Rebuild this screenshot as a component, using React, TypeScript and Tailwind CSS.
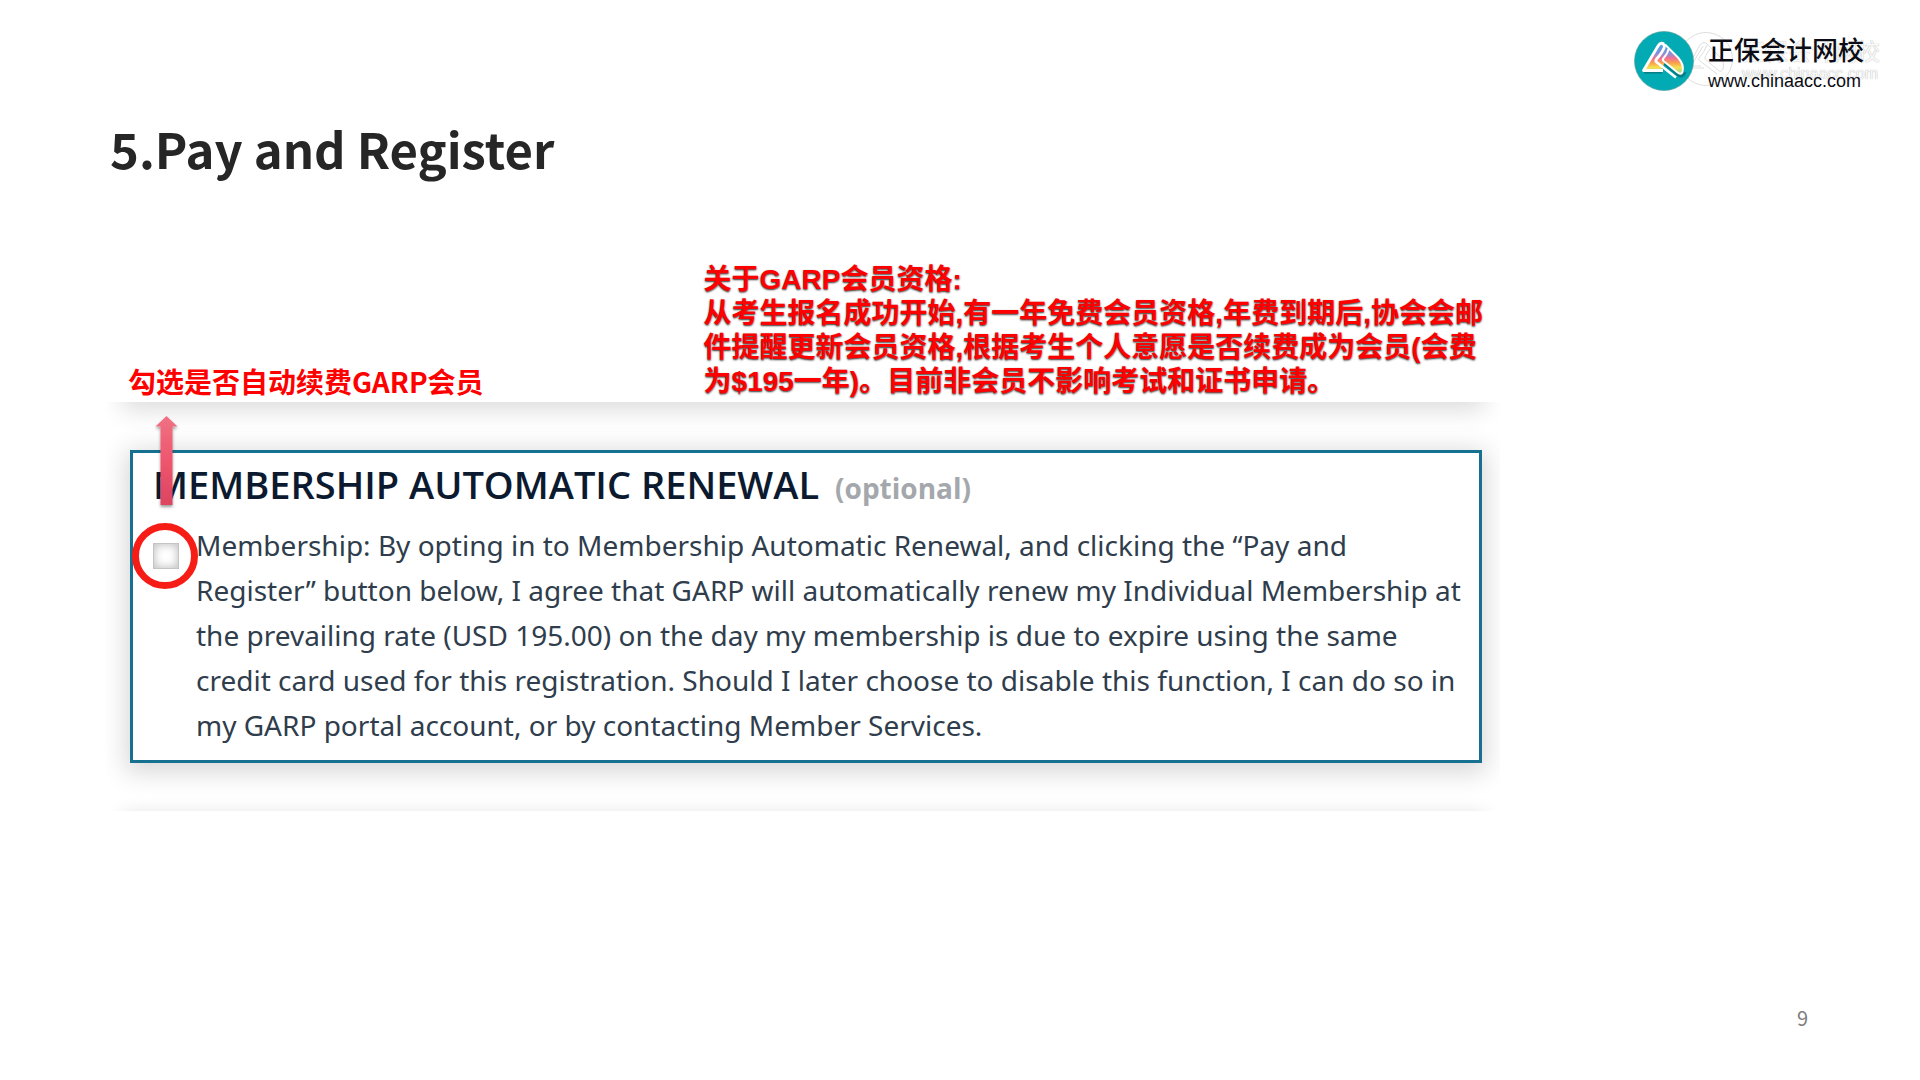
const TERMS = [
  'Membership: By opting in to Membership Automatic Renewal, and clicking the “Pay and',
  'Register” button below, I agree that GARP will automatically renew my Individual Membership at',
  'the prevailing rate (USD 195.00) on the day my membership is due to expire using the same',
  'credit card used for this registration. Should I later choose to disable this function, I can do so in',
  'my GARP portal account, or by contacting Member Services.',
];

const NOTES = [
  '关于GARP会员资格:',
  '从考生报名成功开始,有一年免费会员资格,年费到期后,协会会邮',
  '件提醒更新会员资格,根据考生个人意愿是否续费成为会员(会费',
  '为$195一年)。目前非会员不影响考试和证书申请。',
];

const LogoMark = () => (
  <svg viewBox="0 0 60 60" className="h-[60px] w-[60px] shrink-0" aria-hidden="true">
    <defs>
      <linearGradient id="rainbow" x1="0" y1="0" x2="0" y2="1">
        <stop offset="0.1" stopColor="#4f9fe0" />
        <stop offset="0.35" stopColor="#8c8fd8" />
        <stop offset="0.5" stopColor="#f5708f" />
        <stop offset="0.65" stopColor="#f8a24e" />
        <stop offset="0.8" stopColor="#f6e04d" />
        <stop offset="1" stopColor="#8fd694" />
      </linearGradient>
    </defs>
    <circle cx="30" cy="30" r="29.5" fill="#02abb3" stroke="#5d9ea2" strokeWidth="0.7" />
    <path d="M10 41H28M29 31L44 44Q49 47 51 41" fill="none" stroke="#0b5f66" strokeWidth="3" strokeOpacity="0.6" />
    <path d="M9.500 39.500L24 15Q26.500 11 30 13L45 27.500Q50 34 48.500 41Q47 44 43 41L31 31L27 39.500Z" fill="url(#rainbow)" />
    <path d="M29 39.500H9.500L24 15Q26.500 11 30 13" fill="none" stroke="#fff" strokeWidth="2.800" strokeLinejoin="round" />
    <path d="M29 13Q31 14 30 17Q28 22 22.500 28Q21 30 23 31.500L42 46.500" fill="none" stroke="#fff" strokeWidth="2.800" strokeLinejoin="round" />
    <path d="M31 13.500L44 26.500Q50.500 34 48.500 41Q47 44.500 43 41L29.500 30Q28 28.500 30 26.500Q34 22 34.500 18" fill="none" stroke="#fff" strokeWidth="2" strokeLinejoin="round" />
  </svg>
);

// faint duplicate of the logo that sits behind the main one
const LogoGhost = () => (
  <div className="absolute inset-0" aria-hidden="true">
    <svg viewBox="0 0 54 54" className="absolute left-[45px] top-[3px] h-[54px] w-[54px]">
      <g fill="none" stroke="#d6d6d6" strokeWidth="0.8">
        <circle cx="27" cy="27" r="26.500" />
        <path d="M25 36H8L21 13Q24 9 27 11L41 25Q46 31 44 37Q42 41 39 38L26 27Q25 25 31 17" />
        <path d="M22 34H12L24 14M28 13Q25 21 20 26Q19 28 21 29L38 42" />
      </g>
    </svg>
    <div className="absolute left-[108px] top-[9px] whitespace-nowrap leading-6 text-[#fafafa] [text-shadow:0_0_1px_#999]">
      <div className="font-['Noto_Sans_CJK_SC',sans-serif] text-[23px]">正保会计网校</div>
      <div className="font-['Liberation_Sans',sans-serif] text-base leading-6">www.chinaacc.com</div>
    </div>
  </div>
);

const Logo = () => (
  <a href="http://www.chinaacc.com" className="relative flex items-center gap-[14px]">
    <LogoGhost />
    <div className="relative">
      <LogoMark />
    </div>
    <div className="relative text-[#0c0c14]">
      <div className="font-['Noto_Sans_CJK_SC',sans-serif] text-[26px] font-medium leading-10">正保会计网校</div>
      <div className="font-['Liberation_Sans',sans-serif] text-lg leading-6">www.chinaacc.com</div>
    </div>
  </a>
);

const Arrow = () => (
  <svg viewBox="0 0 32 100" className="absolute left-11 top-3 h-[100px] w-8" aria-hidden="true">
    <defs>
      <linearGradient id="arrow" x1="0" y1="0" x2="0" y2="1">
        <stop offset="0" stopColor="#f07284" />
        <stop offset="0.5" stopColor="#ee566e" />
        <stop offset="1" stopColor="#dc4460" />
      </linearGradient>
      <filter id="arrowShadow" x="-50%" y="-10%" width="200%" height="120%">
        <feDropShadow dx="0" dy="2" stdDeviation="1.500" floodColor="#000" floodOpacity="0.4" />
      </filter>
    </defs>
    <path d="M16.500 2L27.500 12.500H22.500V91H10.500V12.500H5.500Z" fill="url(#arrow)" filter="url(#arrowShadow)" />
  </svg>
);

const MembershipCard = () => (
  <section className="relative max-w-[1394px] overflow-hidden py-12">
    <div className="absolute inset-x-5 -top-10 h-10 shadow-[0_4px_24px_4px_rgba(0,0,0,0.14)]" />
    <div className="absolute inset-x-5 -bottom-11 h-10 shadow-[0_4px_20px_4px_rgba(0,0,0,0.14)]" />
    <div className="relative ml-6 mr-[18px] border-3 border-[#16708f] bg-white px-5 pb-3 pt-1 shadow-[0_5px_24px_4px_rgba(0,0,0,0.16)]">
      <h2 className="flex items-baseline gap-4 whitespace-nowrap font-['Open_Sans',sans-serif] text-[38px] font-semibold leading-[54px] text-[#0c1a30]">
        MEMBERSHIP AUTOMATIC RENEWAL
        <span className="text-[28px] font-bold text-[#a4a8ac]">(optional)</span>
      </h2>
      <div className="flex items-start pt-2">
        <div className="relative mt-5 flex w-[43px] shrink-0">
          <input
            id="renewal"
            type="checkbox"
            className="h-[26px] w-[26px] appearance-none border border-[#c4c4c4] bg-white shadow-[inset_0_0_8px_1px_rgba(0,0,0,0.25)]"
          />
          <span className="pointer-events-none absolute -left-[21px] -top-5 h-[66px] w-[66px] rounded-full border-[7px] border-[#f71d17]" />
        </div>
        <label htmlFor="renewal" className="whitespace-nowrap font-['Noto_Sans',sans-serif] text-[28px] leading-[45px] text-[#2f3d4c]">
          {TERMS.map((line) => (
            <span key={line} className="block">{line}</span>
          ))}
        </label>
      </div>
    </div>
    <Arrow />
  </section>
);

const App = () => {
  return (
    <div className="flex min-h-screen flex-col bg-white font-['Noto_Sans_CJK_SC',sans-serif]">
      <header className="flex justify-end pr-14 pt-[29px]">
        <Logo />
      </header>

      <main className="px-[106px] pt-5">
        <h1 className="pl-1 text-[49px] font-bold leading-[70px] text-[#262626]">5.Pay and Register</h1>

        <div className="flex items-end gap-[220px] pb-[3px] pl-[22px] pt-20 text-[28px] font-bold text-[#fe0000]">
          <p className="whitespace-nowrap leading-9">勾选是否自动续费GARP会员</p>
          <p className="whitespace-nowrap font-['Liberation_Sans','Noto_Sans_CJK_SC',sans-serif] leading-[34px] [text-shadow:0_1px_2px_rgba(0,0,0,0.8)]">
            {NOTES.map((line) => (
              <span key={line} className="block">{line}</span>
            ))}
          </p>
        </div>

        <MembershipCard />
      </main>

      <footer className="mt-auto pb-12 pr-28 text-right text-xl text-[#7f7f7f]">9</footer>
    </div>
  );
};

export default App;
